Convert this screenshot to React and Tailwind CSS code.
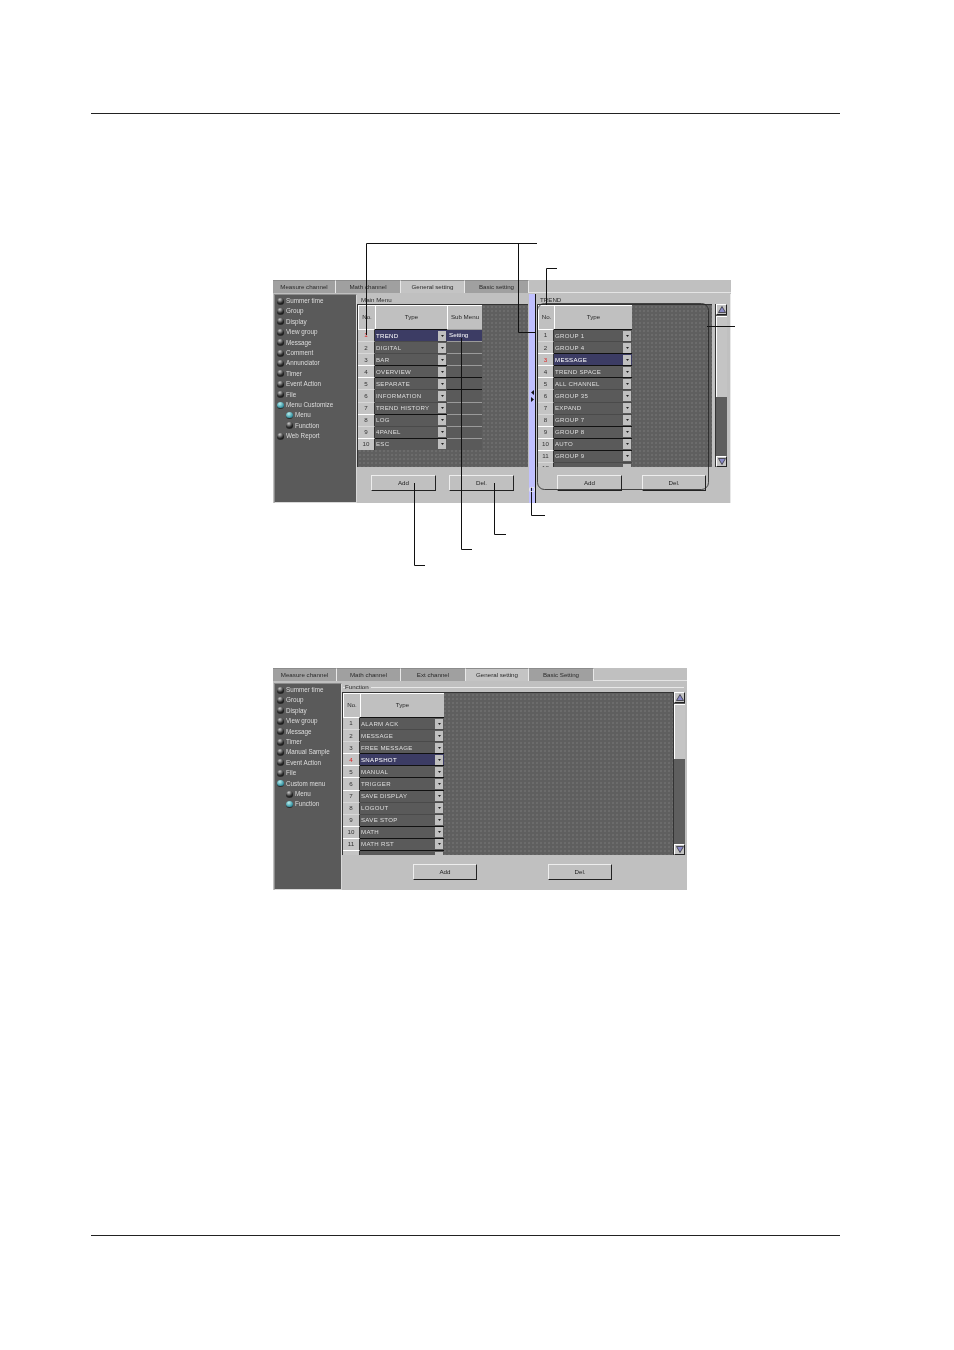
const Ball = ({ on }) => (
  <span
    className={
      "block w-[7px] h-[7px] rounded-full shrink-0 border-b border-[#2a2a2a] " +
      (on
        ? "bg-[radial-gradient(circle_at_40%_30%,#b8f0f0,#2a8898_75%)]"
        : "bg-[radial-gradient(circle_at_40%_25%,#c8c8c8,#3a3a3a_55%,#111_80%)]")
    }
  />
);

const Side = ({ items, w, pt, step }) => (
  <div
    className={`${w} shrink-0 bg-[#5a5a5a] border border-[#8c8c8c] border-r-[#d8d8d8] border-b-[#d8d8d8] ${pt} flex flex-col`}
  >
    {items.map(([t, on, sub]) => (
      <div key={t} className={`flex items-center gap-[2px] ${step} ${sub ? "pl-[11px]" : "pl-[2px]"}`}>
        <Ball on={on} />
        <span className="text-[6.3px] leading-none text-[#dcdcdc] whitespace-nowrap">{t}</span>
      </div>
    ))}
  </div>
);

const Tabs = ({ tabs, widths }) => (
  <div className="flex h-[13px] bg-[#c0c0c0] border-b border-[#e4e4e4] shrink-0">
    {tabs.map(([t, active], i) => (
      <div
        key={t}
        className={`${widths[i]} h-[13px] flex items-center justify-center text-[6.2px] leading-none text-[#2a2a2a] whitespace-nowrap border-t border-r border-t-[#8c8c8c] border-r-[#e8e8e8] ${active ? "bg-[#c4c4c4]" : "bg-[#a0a0a0]"}`}
      >
        {t}
      </div>
    ))}
  </div>
);

const Tri = () => (
  <svg width="5" height="4" viewBox="0 0 5 4">
    <polygon points="1,1 4,1 2.5,3" fill="#222" />
  </svg>
);

const Row = ({ n, label, sel, strong, sub, subSel, subDark, hasSub, noW, typeW, num }) => (
  <div className="flex h-[12.1px] shrink-0">
    <div
      className={`${noW} shrink-0 flex items-center justify-center text-[6.2px] leading-none border-t ${strong ? "border-t-white" : "border-t-[#d8d8d8]"} border-r border-r-[#333] bg-[#c4c4c4] ${sel ? "text-[#e02020]" : "text-[#333]"}`}
    >
      {num ?? n}
    </div>
    <div
      className={`${typeW} shrink-0 flex items-center justify-between border-t ${strong ? "border-t-[#111]" : "border-t-[#4a4a4a]"} ${sel ? "bg-[#3c3c64] text-white" : "bg-[#5a5a5a] text-[#dedede]"}`}
    >
      <span className="pl-[1px] text-[6.1px] tracking-[0.3px] leading-none whitespace-nowrap">{label}</span>
      <span className="w-[8px] h-[10px] mr-[1px] bg-[#c0c0c0] flex items-center justify-center shrink-0">
        <Tri />
      </span>
    </div>
    {hasSub && (
      <div
        className={`w-[35px] shrink-0 flex items-center pl-[2px] text-[6.2px] leading-none border-t ${subDark ? "border-t-[#111]" : "border-t-[#9a9a9a]"} ${subSel ? "bg-[#3c3c64] text-white" : "bg-[#5a5a5a]"}`}
      >
        {sub}
      </div>
    )}
  </div>
);

const Head = ({ children, w }) => (
  <div className={`${w} shrink-0 h-[24px] bg-[#c0c0c0] border-t border-l border-t-white border-l-white flex items-center justify-center text-[6.2px] leading-none text-[#2a2a2a]`}>
    {children}
  </div>
);

const Table = ({ rows, noW, typeW, hasSub, w, h }) => (
  <div
    className={`${w} ${h} shrink-0 overflow-hidden border-l border-t border-[#333] bg-[#5f5f5f] bg-[radial-gradient(circle,#6c6c6c_0.7px,transparent_0.8px)] bg-[length:4px_4px]`}
  >
    <div className="flex">
      <Head w={noW}>No.</Head>
      <Head w={typeW}>Type</Head>
      {hasSub && <Head w="w-[35px]">Sub Menu</Head>}
    </div>
    {rows.map((r, i) => (
      <Row key={i} n={i + 1} {...r} noW={noW} typeW={typeW} hasSub={hasSub} />
    ))}
  </div>
);

const Btn = ({ children, w }) => (
  <div className={`${w} h-[16px] bg-[#c0c0c0] border border-t-[#eeeeee] border-l-[#eeeeee] border-r-[#222] border-b-[#222] flex items-center justify-center text-[6.2px] leading-none text-[#222]`}>
    {children}
  </div>
);

const Scroll = ({ thumb }) => (
  <div className="w-[12px] h-full bg-[#5e5e5e] flex flex-col shrink-0 border-l border-[#333]">
    <div className="h-[11px] bg-[#c4c4c4] border border-t-white border-l-white border-r-[#222] border-b-[#222] flex items-center justify-center shrink-0">
      <svg width="8" height="7" viewBox="0 0 8 7"><polygon points="4,0.5 7.5,6.5 0.5,6.5" fill="#8a8ac8" stroke="#222" strokeWidth="0.7" /></svg>
    </div>
    <div className={`${thumb} bg-[#c4c4c4] border-t border-l border-white shrink-0 mt-px`} />
    <div className="flex-1" />
    <div className="h-[11px] bg-[#c4c4c4] border border-t-white border-l-white border-r-[#222] border-b-[#222] flex items-center justify-center shrink-0">
      <svg width="8" height="7" viewBox="0 0 8 7"><polygon points="4,6.5 7.5,0.5 0.5,0.5" fill="#8a8ac8" stroke="#222" strokeWidth="0.7" /></svg>
    </div>
  </div>
);

const Label = ({ children }) => (
  <div className="h-[9px] text-[6.2px] leading-[9px] text-[#2a2a2a] whitespace-nowrap">{children}</div>
);

const mainRows = [
  { label: "TREND", sel: true, strong: true, sub: "Setting", subSel: true },
  { label: "DIGITAL" },
  { label: "BAR" },
  { label: "OVERVIEW", strong: true },
  { label: "SEPARATE", strong: true, subDark: true },
  { label: "INFORMATION", subDark: true },
  { label: "TREND HISTORY" },
  { label: "LOG", strong: true },
  { label: "4PANEL" },
  { label: "ESC", strong: true },
];

const trendRows = [
  { label: "GROUP 1", strong: true },
  { label: "GROUP 4" },
  { label: "MESSAGE", sel: true, strong: true },
  { label: "TREND SPACE", strong: true },
  { label: "ALL CHANNEL", strong: true },
  { label: "GROUP 35" },
  { label: "EXPAND" },
  { label: "GROUP 7" },
  { label: "GROUP 8", strong: true },
  { label: "AUTO", strong: true },
  { label: "GROUP 9", strong: true },
  { label: "GROUP 10" },
];

const funcRows = [
  { label: "ALARM ACK", strong: true },
  { label: "MESSAGE" },
  { label: "FREE MESSAGE" },
  { label: "SNAPSHOT", sel: true, strong: true },
  { label: "MANUAL", strong: true },
  { label: "TRIGGER", strong: true },
  { label: "SAVE DISPLAY", strong: true },
  { label: "LOGOUT" },
  { label: "SAVE STOP" },
  { label: "MATH", strong: true },
  { label: "MATH RST", strong: true },
  { label: "", num: "", strong: true },
];

const side1 = [
  ["Summer time"], ["Group"], ["Display"], ["View group"], ["Message"], ["Comment"],
  ["Annunciator"], ["Timer"], ["Event Action"], ["File"], ["Menu Customize", true],
  ["Menu", true, true], ["Function", false, true], ["Web Report"],
];

const side2 = [
  ["Summer time"], ["Group"], ["Display"], ["View group"], ["Message"], ["Timer"],
  ["Manual Sample"], ["Event Action"], ["File"], ["Custom menu", true],
  ["Menu", false, true], ["Function", true, true],
];

const Callouts = () => (
  <svg className="absolute left-0 top-0 pointer-events-none" width="954" height="1350" fill="none">
    <g stroke="#111" strokeWidth="1">
      <path d="M537 243.5H366.5V335" />
      <path d="M518.5 243.5V332.5H536" />
      <path d="M557 268.5H546.5V305" />
      <path d="M707 326.5H735" />
      <path d="M531.5 487V515.5H545" />
      <path d="M494.5 483V534.5H506" />
      <path d="M461.5 338V549.5H472" />
      <path d="M414.5 483V565.5H425" />
    </g>
    <rect x="537.5" y="303.5" width="171" height="186" rx="7" stroke="#222" strokeWidth="0.8" />
    <rect x="529.5" y="487.5" width="5" height="4" rx="1" stroke="#eee" strokeWidth="0.8" />
  </svg>
);

export default function App() {
  return (
    <div className="relative w-[954px] h-[1350px] bg-white overflow-hidden font-['Liberation_Sans',Arial,sans-serif] px-[91px] pt-[113px] flex flex-col">
      <div className="h-px bg-[#222] w-[749px] shrink-0" />

      {/* Window 1 */}
      <div className="ml-[182px] mt-[166px] w-[458px] h-[223px] bg-[#c0c0c0] flex flex-col shrink-0 blur-[0.3px]">
        <Tabs
          tabs={[["Measure channel"], ["Math channel"], ["General setting", true], ["Basic setting"]]}
          widths={["w-[63px]", "w-[65px]", "w-[64px]", "w-[64px]"]}
        />
        <div className="flex flex-1 min-h-0 pt-px pl-px">
          <Side items={side1} w="w-[83px]" pt="pt-[1px]" step="h-[10.4px]" />
          <div className="w-[172px] shrink-0 pt-[1px] flex flex-col">
            <div className="pl-[4px]"><Label>Main Menu</Label></div>
            <Table rows={mainRows} noW="w-[17px]" typeW="w-[72px]" hasSub w="w-[171px]" h="h-[163px]" />
            <div className="flex gap-[13px] pl-[14px] mt-[8px]">
              <Btn w="w-[65px]">Add</Btn>
              <Btn w="w-[65px]">Del.</Btn>
            </div>
          </div>
          <div className="relative w-[7px] shrink-0 bg-[#c0c0ff] border-r border-[#111] flex flex-col items-center justify-center pb-[4px]">
            <svg width="5" height="13" viewBox="0 0 5 13">
              <polygon points="4,0 4,5 1,2.5" fill="#111" />
              <polygon points="1,7 1,12 4,9.5" fill="#111" />
            </svg>
          </div>
          <div className="flex-1 pl-[1px] pt-[1px] pr-[3px] flex flex-col border-r border-[#e8e8e8] mr-[2px]">
            <div className="pl-[3px]"><Label>TREND</Label></div>
            <div className="flex gap-[3px] h-[163px]">
              <Table rows={trendRows} noW="w-[16px]" typeW="w-[78px]" w="w-[175px]" h="h-[163px]" />
              <Scroll thumb="h-[81px]" />
            </div>
            <div className="flex gap-[20px] pl-[20px] mt-[8px]">
              <Btn w="w-[65px]">Add</Btn>
              <Btn w="w-[64px]">Del.</Btn>
            </div>
          </div>
        </div>
      </div>

      {/* Window 2 */}
      <div className="ml-[182px] mt-[165px] w-[414px] h-[222px] bg-[#c0c0c0] flex flex-col shrink-0 blur-[0.3px]">
        <Tabs
          tabs={[["Measure channel"], ["Math channel"], ["Ext channel"], ["General setting", true], ["Basic Setting"]]}
          widths={["w-[64px]", "w-[64px]", "w-[65px]", "w-[63px]", "w-[65px]"]}
        />
        <div className="flex flex-1 min-h-0 pt-[2px] pl-px">
          <Side items={side2} w="w-[68px]" pt="pt-[1px]" step="h-[10.4px]" />
          <div className="flex-1 flex flex-col">
            <div className="relative h-[9px] flex items-center pl-[3px]">
              <div className="absolute left-[1px] right-[3px] top-[4px] h-px bg-[#e8e8e8]" />
              <span className="relative bg-[#c0c0c0] pr-[2px] text-[6.2px] leading-none text-[#2a2a2a]">Function</span>
            </div>
            <div className="flex h-[163px]">
              <Table rows={funcRows} noW="w-[17px]" typeW="w-[84px]" w="w-[331px]" h="h-[163px]" />
              <Scroll thumb="h-[55px]" />
            </div>
            <div className="flex gap-[71px] pl-[71px] mt-[9px]">
              <Btn w="w-[64px]">Add</Btn>
              <Btn w="w-[64px]">Del.</Btn>
            </div>
          </div>
        </div>
      </div>

      <div className="h-px bg-[#222] w-[749px] mt-[345px] shrink-0" />
      <Callouts />
    </div>
  );
}
